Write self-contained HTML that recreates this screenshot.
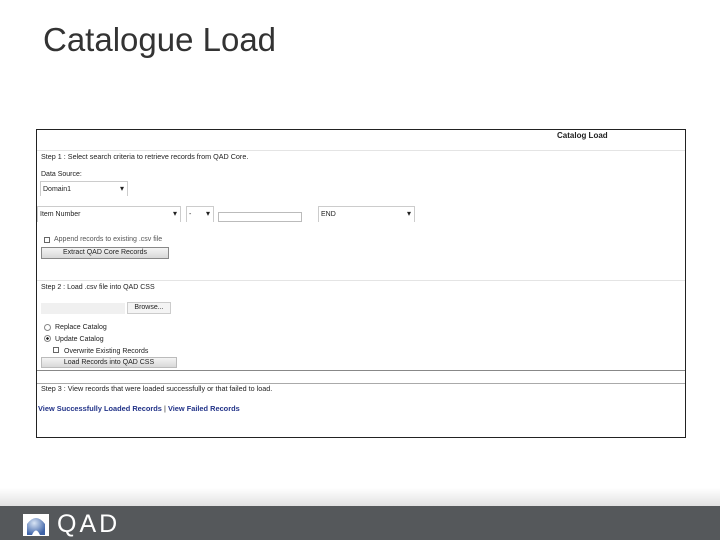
<!DOCTYPE html>
<html><head><meta charset="utf-8"><style>
*{margin:0;padding:0;box-sizing:border-box}
body{width:720px;height:540px;overflow:hidden;background:#fff;position:relative;font-family:"Liberation Sans",Arial,sans-serif}
.a{position:absolute}
.t{font-size:7px;color:#222;white-space:nowrap}
.sel{position:absolute;border-top:1px solid #ccc;border-left:1px solid #ccc;border-right:1px solid #ccc;font-size:7px;color:#222;padding:4px 2px 0}
.sel:after{content:"▾";position:absolute;right:3px;top:2px;font-size:8px}
.btn{position:absolute;border:1px solid #888;background:linear-gradient(#f4f4f4,#d8d8d8);font-size:7px;text-align:center;color:#222;line-height:10px}
.cb{position:absolute;width:6px;height:6px;border:1px solid #666;background:#fff}
.rd{position:absolute;width:7px;height:7px;border:1px solid #888;border-radius:50%;background:#fff}
</style></head><body>
<div class="a" style="left:43px;top:21px;font-size:33px;color:#333">Catalogue Load</div>

<div class="a" style="left:36px;top:129px;width:650px;height:309px;border:1px solid #222"></div>
<div class="a t" style="left:557px;top:131px;font-weight:bold;font-size:8px">Catalog Load</div>
<div class="a" style="left:37px;top:150px;width:648px;height:1px;background:#e4e4e4"></div>
<div class="a t" style="left:41px;top:152px;font-size:7.2px">Step 1 : Select search criteria to retrieve records from QAD Core.</div>
<div class="a t" style="left:41px;top:171px">Data Source:</div>
<div class="sel" style="left:40px;top:181px;width:88px;height:15px">Domain1</div>
<div class="sel" style="left:37px;top:206px;width:144px;height:16px">Item Number</div>
<div class="sel" style="left:186px;top:206px;width:28px;height:16px">-</div>
<div class="a" style="left:218px;top:212px;width:84px;height:10px;border:1px solid #bbb"></div>
<div class="sel" style="left:318px;top:206px;width:97px;height:16px">END</div>
<div class="cb" style="left:44px;top:237px"></div>
<div class="a t" style="left:54px;top:236px;color:#555">Append records to existing .csv file</div>
<div class="btn" style="left:41px;top:247px;width:128px;height:12px">Extract QAD Core Records</div>
<div class="a" style="left:37px;top:280px;width:648px;height:1px;background:#e4e4e4"></div>
<div class="a t" style="left:41px;top:284px">Step 2 : Load .csv file into QAD CSS</div>
<div class="a" style="left:41px;top:303px;width:84px;height:11px;background:#f0f0f0"></div>
<div class="btn" style="left:127px;top:302px;width:44px;height:12px;border-color:#ccc;background:#f4f4f4">Browse...</div>
<div class="rd" style="left:44px;top:324px"></div>
<div class="a t" style="left:55px;top:324px">Replace Catalog</div>
<div class="rd" style="left:44px;top:335px;background:radial-gradient(#222 35%,#fff 40%)"></div>
<div class="a t" style="left:55px;top:336px">Update Catalog</div>
<div class="cb" style="left:53px;top:347px"></div>
<div class="a t" style="left:64px;top:348px">Overwrite Existing Records</div>
<div class="btn" style="left:41px;top:357px;width:136px;height:11px;border-color:#bbb">Load Records into QAD CSS</div>
<div class="a" style="left:37px;top:370px;width:648px;height:1px;background:#888"></div>
<div class="a" style="left:37px;top:383px;width:648px;height:1px;background:#aaa"></div>
<div class="a t" style="left:41px;top:384px;font-size:7.2px">Step 3 : View records that were loaded successfully or that failed to load.</div>
<div class="a t" style="left:38px;top:404px;color:#223388;font-weight:bold;font-size:7.4px">View Successfully Loaded Records <span style="color:#222;font-weight:normal">|</span> View Failed Records</div>

<div class="a" style="left:0;top:488px;width:720px;height:18px;background:linear-gradient(#fff,#e2e2e2)"></div>
<div class="a" style="left:0;top:506px;width:720px;height:34px;background:#55585b"></div>
<svg class="a" style="left:23px;top:514px" width="27" height="22" viewBox="0 0 27 22">
<rect x="0" y="0" width="26" height="22" fill="#fff"/>
<defs><radialGradient id="g" cx="0.4" cy="0.3" r="0.7"><stop offset="0" stop-color="#d8e4f4"/><stop offset="1" stop-color="#3f64a8"/></radialGradient></defs>
<path d="M4 21 L4 10 Q13 -2 22 10 L22 21 L17 21 Q13 12 9 21 Z" fill="url(#g)"/>
</svg>
<div class="a" style="left:57px;top:510px;font-size:25px;color:#fff;letter-spacing:3px">QAD</div>
</body></html>
